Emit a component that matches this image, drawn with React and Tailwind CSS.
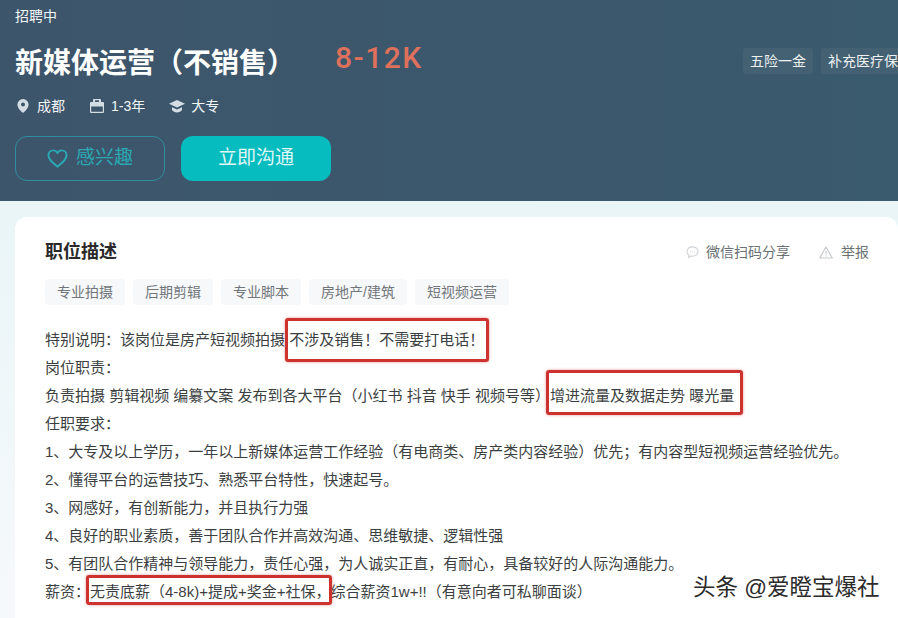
import React from "react";

const font = { fontFamily: '"Liberation Sans","Noto Sans CJK SC",sans-serif' };

function Mark({ children, box }) {
  return (
    <span className="relative">
      {children}
      <span className={`absolute border-[3px] border-[#cc322e] rounded-[3px] shadow-[0_0_3px_rgba(207,47,43,0.5)] ${box}`} />
    </span>
  );
}

function Pin() {
  return (
    <svg width="12" height="14" viewBox="0 0 12 14" className="text-[#d4dde4]">
      <path fill="currentColor" fillRule="evenodd" d="M6 0a5.6 5.6 0 0 1 5.6 5.6C11.6 9 8 12.4 6 14 4 12.4.4 9 .4 5.6A5.6 5.6 0 0 1 6 0Zm0 3.600a2 2 0 1 0 0 4 2 2 0 0 0 0-4Z" />
    </svg>
  );
}
function Case() {
  return (
    <svg width="14" height="14" viewBox="0 0 14 14" className="text-[#d4dde4]">
      <path fill="currentColor" fillRule="evenodd" d="M4 0h6a1 1 0 0 1 1 1v2h2a1 1 0 0 1 1 1v9a1 1 0 0 1-1 1H1a1 1 0 0 1-1-1V4a1 1 0 0 1 1-1h2V1a1 1 0 0 1 1-1Zm1 1.300V3h4V1.300H5ZM1.200 7.400v5.400h11.600V7.400H1.200Z" />
    </svg>
  );
}
function Cap() {
  return (
    <svg width="16" height="14" viewBox="0 0 16 14" className="text-[#d4dde4]">
      <path fill="currentColor" d="M8 1 16 4.800 8 8.600 0 4.800 8 1Z" />
      <path fill="currentColor" d="M3 8.200 8 10.500l5-2.300V11c-1 1.500-3 2.400-5 2.400S4 12.500 3 11V8.200Z" />
    </svg>
  );
}

function Meta({ icon, children, className }) {
  return (
    <div className={`flex items-center ${className}`}>
      {icon}
      <span className="text-[14px] text-[#f2f5f7]">{children}</span>
    </div>
  );
}

function Tag({ children }) {
  return <span className="h-[26px] px-3 flex items-center rounded-[4px] bg-[#f7f8fa] text-[14px] text-[#71767a]">{children}</span>;
}

function BenefitTag({ children }) {
  return <span className="h-[26px] px-[7px] flex items-center shrink-0 rounded-[3px] bg-[#446073] text-[14px] text-[#eef2f4]">{children}</span>;
}

export default function App() {
  return (
    <div style={font} className="relative w-[898px] h-[618px] overflow-hidden bg-gradient-to-b from-[#e3f3f5] to-[#f6f9fc]">
      <header className="h-[201px] bg-gradient-to-r from-[#3d556b] to-[#3a5a6d] pl-[15px] pt-[7px] flex flex-col">
        <div className="text-[14px] leading-[18px] text-[#f3f6f8]">招聘中</div>
        <div className="flex items-start mt-[22px] h-[40px]">
          <h1 className="text-[28px] leading-[34px] font-bold text-white w-[320px]">新媒体运营（不销售）</h1>
          <span className="text-[30px] leading-[28px] font-medium text-[#df705c] tracking-[1.5px] -mt-[3px]" style={{ fontFamily: "Roboto,sans-serif" }}>8-12K</span>
          <div className="ml-auto flex gap-2 w-[155px] mt-[1px] overflow-hidden">
            <BenefitTag>五险一金</BenefitTag>
            <BenefitTag>补充医疗保</BenefitTag>
          </div>
        </div>
        <div className="flex items-center mt-[7px] h-[24px]">
          <Meta icon={<Pin />} className="gap-[8px] ml-[2px]">成都</Meta>
          <Meta icon={<Case />} className="gap-[7px] ml-[25px]">1-3年</Meta>
          <Meta icon={<Cap />} className="gap-[6px] ml-[24px]">大专</Meta>
        </div>
        <div className="flex gap-4 mt-[18px]">
          <button className="w-[150px] h-[45px] rounded-[12px] border border-[#2f8fa0] flex items-center justify-center gap-[8px] text-[19px] text-[#2aa9b3]">
            <svg width="21" height="19" viewBox="0 0 24 22" fill="none" stroke="#2aa9b3" strokeWidth="2.200" strokeLinejoin="round">
              <path d="M12 20.500C6 15.500 1.500 12 1.500 7.200 1.500 4 4 1.600 7 1.600c2 0 3.900 1 5 3 1.100-2 3-3 5-3 3 0 5.500 2.400 5.500 5.600 0 4.800-4.500 8.300-10.500 13.300Z" />
            </svg>
            感兴趣
          </button>
          <button className="w-[150px] h-[45px] rounded-[12px] bg-[#06bcbf] flex items-center justify-center text-[19px] text-[#dff7f7]">立即沟通</button>
        </div>
      </header>

      <main className="ml-[15px] mt-4 h-[420px] rounded-t-[12px] bg-white pl-[30px] pr-[29px] pt-[22px]">
        <div className="flex items-center justify-between h-[26px]">
          <h2 className="text-[18px] font-bold text-[#2a2a2a]">职位描述</h2>
          <div className="flex items-center text-[14px] text-[#6b7074]">
            <svg width="13" height="13" viewBox="0 0 14 14" fill="none" stroke="#cfd3d6" strokeWidth="1.200" className="mr-[7px]">
              <path d="M7 1c3.300 0 6 2.200 6 5s-2.700 5-6 5c-.7 0-1.300-.1-1.900-.3L3 12.500v-2.800C1.800 8.800 1 7.500 1 6c0-2.800 2.700-5 6-5Z" />
              <path d="M4.500 6h.6M6.800 6h.6M9 6h.6" />
            </svg>
            <span>微信扫码分享</span>
            <svg width="14" height="13" viewBox="0 0 14 13" fill="none" stroke="#c6cacd" strokeWidth="1.200" className="ml-[29px] mr-[8px]">
              <path strokeLinejoin="round" d="M7 1 13.300 12H.7L7 1Z" />
              <path d="M7 5v3.500M7 9.500v1" />
            </svg>
            <span>举报</span>
          </div>
        </div>

        <div className="flex gap-2 mt-[14px]">
          <Tag>专业拍摄</Tag>
          <Tag>后期剪辑</Tag>
          <Tag>专业脚本</Tag>
          <Tag>房地产/建筑</Tag>
          <Tag>短视频运营</Tag>
        </div>

        <div className="mt-[21px] text-[15px] leading-[28px] text-[#3c3f42] whitespace-nowrap">
          <div>特别说明：该岗位是房产短视频拍摄<Mark box="-left-0 -right-[5px] -top-[13px] -bottom-[14px]"> 不涉及销售！不需要打电话！</Mark></div>
          <div>岗位职责：</div>
          <div>负责拍摄 剪辑视频 编纂文案 发布到各大平台（小红书 抖音 快手 视频号等）<Mark box="-left-[4px] -right-[9px] -top-[17px] -bottom-[11px]">增进流量及数据走势 曝光量</Mark></div>
          <div>任职要求：</div>
          <div>1、大专及以上学历，一年以上新媒体运营工作经验（有电商类、房产类内容经验）优先；有内容型短视频运营经验优先。</div>
          <div>2、懂得平台的运营技巧、熟悉平台特性，快速起号。</div>
          <div>3、网感好，有创新能力，并且执行力强</div>
          <div>4、良好的职业素质，善于团队合作并高效沟通、思维敏捷、逻辑性强</div>
          <div>5、有团队合作精神与领导能力，责任心强，为人诚实正直，有耐心，具备较好的人际沟通能力。</div>
          <div>薪资：<Mark box="-left-[4px] -right-[2px] -top-[8px] -bottom-[5px]">无责底薪（4-8k)+提成+奖金+社保，</Mark>综合薪资1w+!!（有意向者可私聊面谈）</div>
        </div>
      </main>

      <div className="absolute left-[693px] top-[574px] text-[22.5px] leading-[28px] text-[#2b2b2b] [text-shadow:0_1px_0_#fff,1px_0_0_#fff,0_-1px_0_#fff,-1px_0_0_#fff]">头条 @爱瞪宝爆社</div>
    </div>
  );
}
